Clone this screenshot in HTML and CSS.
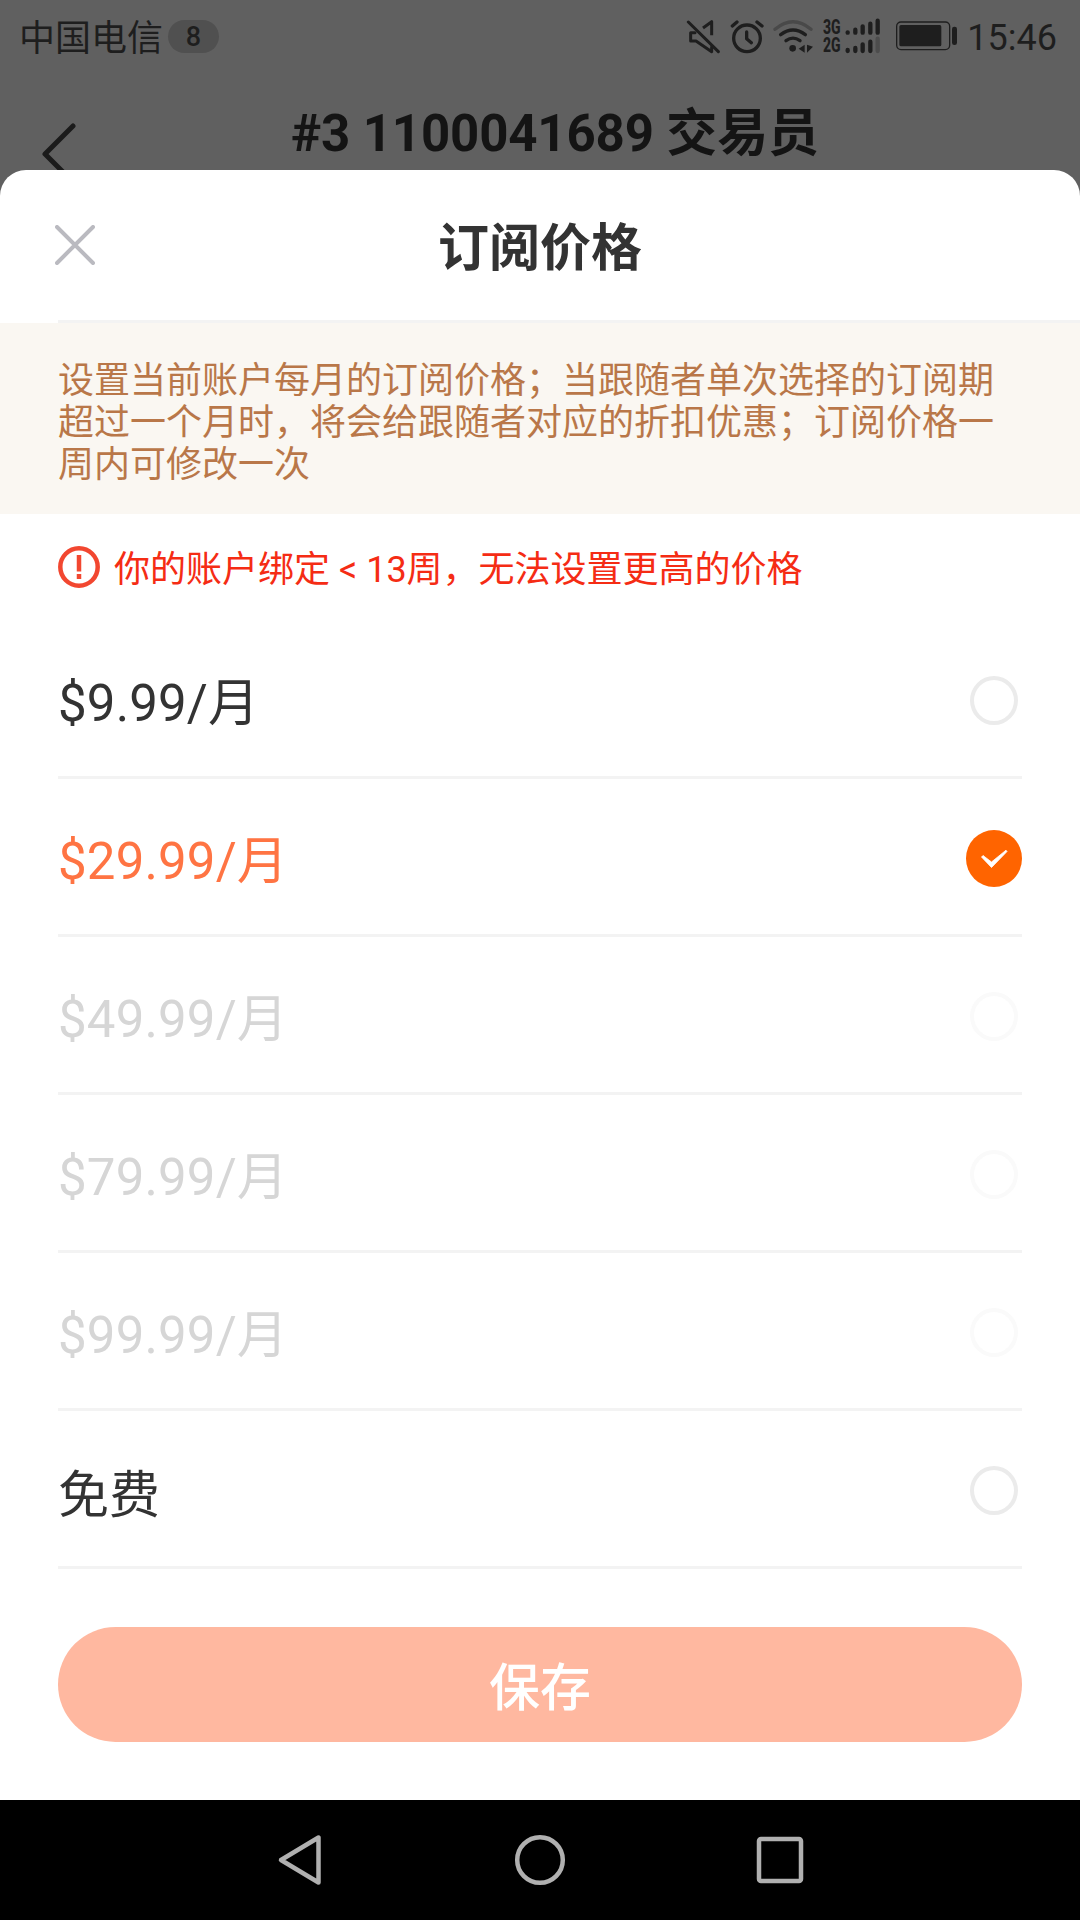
FILE: index.html
```html
<!DOCTYPE html>
<html lang="zh-CN">
<head>
<meta charset="utf-8">
<title>订阅价格</title>
<link rel="stylesheet" href="styles.css">
</head>
<body>
<div class="screen">
  <div class="backdrop">
    <div class="status">
      <span class="carrier">中国电信</span>
      <span class="count">8</span>
      <div class="indicators">
        <svg class="mute" width="34" height="36" viewBox="50 56 102 108" fill="none" stroke="#1e1e1e" stroke-width="9" stroke-linecap="round" stroke-linejoin="round">
          <path d="M57 65L147 154"/>
          <path d="M77 97H64V122H80L127 154V140"/>
          <path d="M101 83L127 64V105" stroke-linecap="butt"/>
        </svg>
        <svg class="alarm" width="34" height="36" viewBox="181 56 102 108" fill="none" stroke="#1e1e1e" stroke-width="10" stroke-linecap="round" stroke-linejoin="round">
          <circle cx="232" cy="114" r="40"/>
          <path d="M231 95V115L245 127M188 77L202 65M262 65L277 77"/>
        </svg>
        <svg class="wifi" width="40" height="36" viewBox="310 56 120 108" fill="none" stroke="#1e1e1e" stroke-width="10" stroke-linecap="round">
          <path d="M316 87Q370 42 424 87" stroke="#494949"/>
          <path d="M333 103Q370 75 407 103M349 121Q370 106 391 121"/>
          <circle cx="369" cy="144" r="10" fill="#1e1e1e" stroke="none"/>
          <path d="M387 145L405 133V157ZM412 133V157L430 139Z" fill="#1e1e1e" stroke="none"/>
        </svg>
        <div class="network">3G<br>2G</div>
        <svg class="bars" width="36" height="36" viewBox="525 51 108 108" stroke="#1e1e1e" stroke-width="13" stroke-linecap="round">
          <path d="M533 94V95M556 86V95M578 76V95M601 68V95M623 59V95M533 147V150M556 141V150M578 130V150M601 122V150"/>
          <path d="M623 113V150" stroke="#4d4d4d"/>
        </svg>
        <svg class="battery" width="62" height="30" viewBox="677 62 186 90">
          <rect x="679" y="65" width="159" height="83" rx="13" fill="none" stroke="#1e1e1e" stroke-width="4"/>
          <rect x="687" y="74" width="126" height="64" rx="5" fill="#1e1e1e"/>
          <rect x="845" y="79" width="15" height="55" rx="7" fill="#1e1e1e"/>
        </svg>
        <span class="clock">15:46</span>
      </div>
    </div>
    <div class="titlebar">
      <svg class="back" width="40" height="66" viewBox="0 0 40 66" fill="none" stroke="#1b1b1b" stroke-width="5" stroke-linecap="round" stroke-linejoin="round"><path d="M33 5L5 33L33 61"/></svg>
      <div class="trader">#3 1100041689 交易员</div>
    </div>
  </div>
  <main class="sheet">
    <header class="sheet-head">
      <svg class="close" width="40" height="40" viewBox="0 0 40 40" stroke="#babac0" stroke-width="4" stroke-linecap="round"><path d="M2 2L38 38M38 2L2 38"/></svg>
      <h1>订阅价格</h1>
    </header>
    <div class="head-line"></div>
    <p class="notice">设置当前账户每月的订阅价格；当跟随者单次选择的订阅期超过一个月时，将会给跟随者对应的折扣优惠；订阅价格一周内可修改一次</p>
    <div class="warning">
      <svg width="42" height="42" viewBox="0 0 42 42" fill="none" stroke="#f24730" stroke-width="4.500"><circle cx="21" cy="21" r="18.700"/><path d="M21 9V25.500M21 28V33"/></svg>
      <span>你的账户绑定 &lt; 13周，无法设置更高的价格</span>
    </div>
    <ul class="prices">
      <li><span class="amount">$9.99/月</span><i class="radio"></i></li>
      <li class="selected"><span class="amount">$29.99/月</span>
        <svg class="check" width="56" height="57" viewBox="0 0 56 57"><ellipse cx="28" cy="28.500" rx="28" ry="28.500" fill="#ff6400"/><path d="M15.500 27L25.500 37.500L41 21.500L40 20.200L25.500 32L17 25.500Z" fill="#fff" stroke="#fff" stroke-width="0.800" stroke-linejoin="round"/></svg>
      </li>
      <li class="disabled"><span class="amount">$49.99/月</span><i class="radio"></i></li>
      <li class="disabled"><span class="amount">$79.99/月</span><i class="radio"></i></li>
      <li class="disabled"><span class="amount">$99.99/月</span><i class="radio"></i></li>
      <li><span>免费</span><i class="radio"></i></li>
    </ul>
    <button class="save">保存</button>
  </main>
  <nav class="navbar">
    <svg width="50" height="54" viewBox="0 0 50 54"><path d="M43.500 4.500V49.500L6 27Z"/></svg>
    <svg width="54" height="54" viewBox="0 0 54 54"><circle cx="27" cy="27" r="22.800"/></svg>
    <svg width="50" height="54" viewBox="0 0 50 54"><rect x="4" y="6" width="42" height="42" rx="2"/></svg>
  </nav>
</div>
</body>
</html>
```
FILE: styles.css
```css
* { box-sizing: border-box; }
body {
  margin: 0;
  font-family: Roboto, "Noto Sans CJK SC", sans-serif;
  color: #333;
}
.screen {
  width: 1080px;
  height: 1920px;
  display: flex;
  flex-direction: column;
  background: #606060;
  overflow: hidden;
}
.backdrop { height: 170px; flex: none; }
.status {
  height: 74px;
  padding: 0 23px 0 19px;
  display: flex;
  align-items: center;
  color: #1e1e1e;
}
.carrier { padding-top: 4px; font-size: 36px; line-height: 50px; }
.count {
  width: 51px;
  height: 33px;
  margin: 0 0 1px 5px;
  border-radius: 17px;
  background: #505050;
  font-size: 27px;
  font-weight: 500;
  line-height: 34px;
  text-align: center;
}
.indicators { margin-left: auto; display: flex; align-items: center; }
.alarm { margin-left: 10px; }
.wifi { margin-left: 9px; }
.network {
  margin: 0 0 2px 10px;
  width: 18px;
  font-size: 20px;
  font-weight: 800;
  line-height: 18px;
  transform: scaleX(0.7);
  transform-origin: left;
}
.bars { margin: 0 15px 2px 4px; }
.battery { margin-bottom: 2px; }
.clock { margin-left: 9px; padding-top: 1px; font-size: 36px; line-height: 40px; }
.titlebar {
  height: 96px;
  display: flex;
  padding-left: 40px;
  overflow: hidden;
}
.back { flex: none; margin-top: 47px; }
.trader {
  margin: 23px 0 0 211px;
  font-size: 51px;
  line-height: 74px;
  height: 74px;
  font-weight: 700;
  letter-spacing: -0.15px;
  color: #141414;
  white-space: nowrap;
}
.sheet {
  height: 1630px;
  flex: none;
  background: #fff;
  border-radius: 26px 26px 0 0;
}
.sheet-head {
  height: 150px;
  padding: 0 55px;
  display: grid;
  grid-template-columns: 40px 1fr 40px;
  align-items: center;
}
.sheet-head h1 {
  margin: 8px 0 0;
  font-size: 51px;
  line-height: 74px;
  font-weight: 700;
  text-align: center;
}
.head-line { height: 3px; margin-left: 58px; background: #f3f3f3; }
.notice {
  margin: 0;
  height: 191px;
  padding: 37px 58px 0;
  background: #faf7f2;
  color: #b97749;
  font-size: 36px;
  line-height: 42px;
}
.warning {
  height: 107px;
  padding-left: 58px;
  display: flex;
  align-items: center;
  gap: 14px;
  color: #f52c14;
  font-size: 36px;
  line-height: 52px;
}
.warning svg { margin-bottom: 1px; }
.warning span { padding-top: 5px; }
.prices { list-style: none; margin: 0 58px; padding: 0; }
.prices li {
  height: 158px;
  padding-top: 4px;
  border-bottom: 3px solid #f3f3f3;
  display: flex;
  align-items: center;
  justify-content: space-between;
  font-size: 51px;
}
.amount { padding-bottom: 4px; letter-spacing: 0.15px; }
.prices .selected { color: #ff7443; }
.prices .disabled { color: #d6d6d6; }
.radio {
  width: 48px;
  height: 49px;
  margin-right: 4px;
  border: 4px solid #ebebeb;
  border-radius: 50%;
}
.disabled .radio { border-color: #fafafa; }
.save {
  display: block;
  width: 964px;
  height: 115px;
  margin: 58px 58px 0;
  padding: 8px 0 0;
  border: 0;
  border-radius: 58px;
  background: #ffb8a0;
  color: #fff;
  font: 500 51px/74px Roboto, "Noto Sans CJK SC", sans-serif;
}
.navbar {
  height: 120px;
  flex: none;
  padding: 0 275px;
  display: flex;
  align-items: center;
  justify-content: space-between;
  background: #000;
}
.navbar svg { fill: none; stroke: #b0b0b0; stroke-width: 4.5; stroke-linejoin: round; }
```
